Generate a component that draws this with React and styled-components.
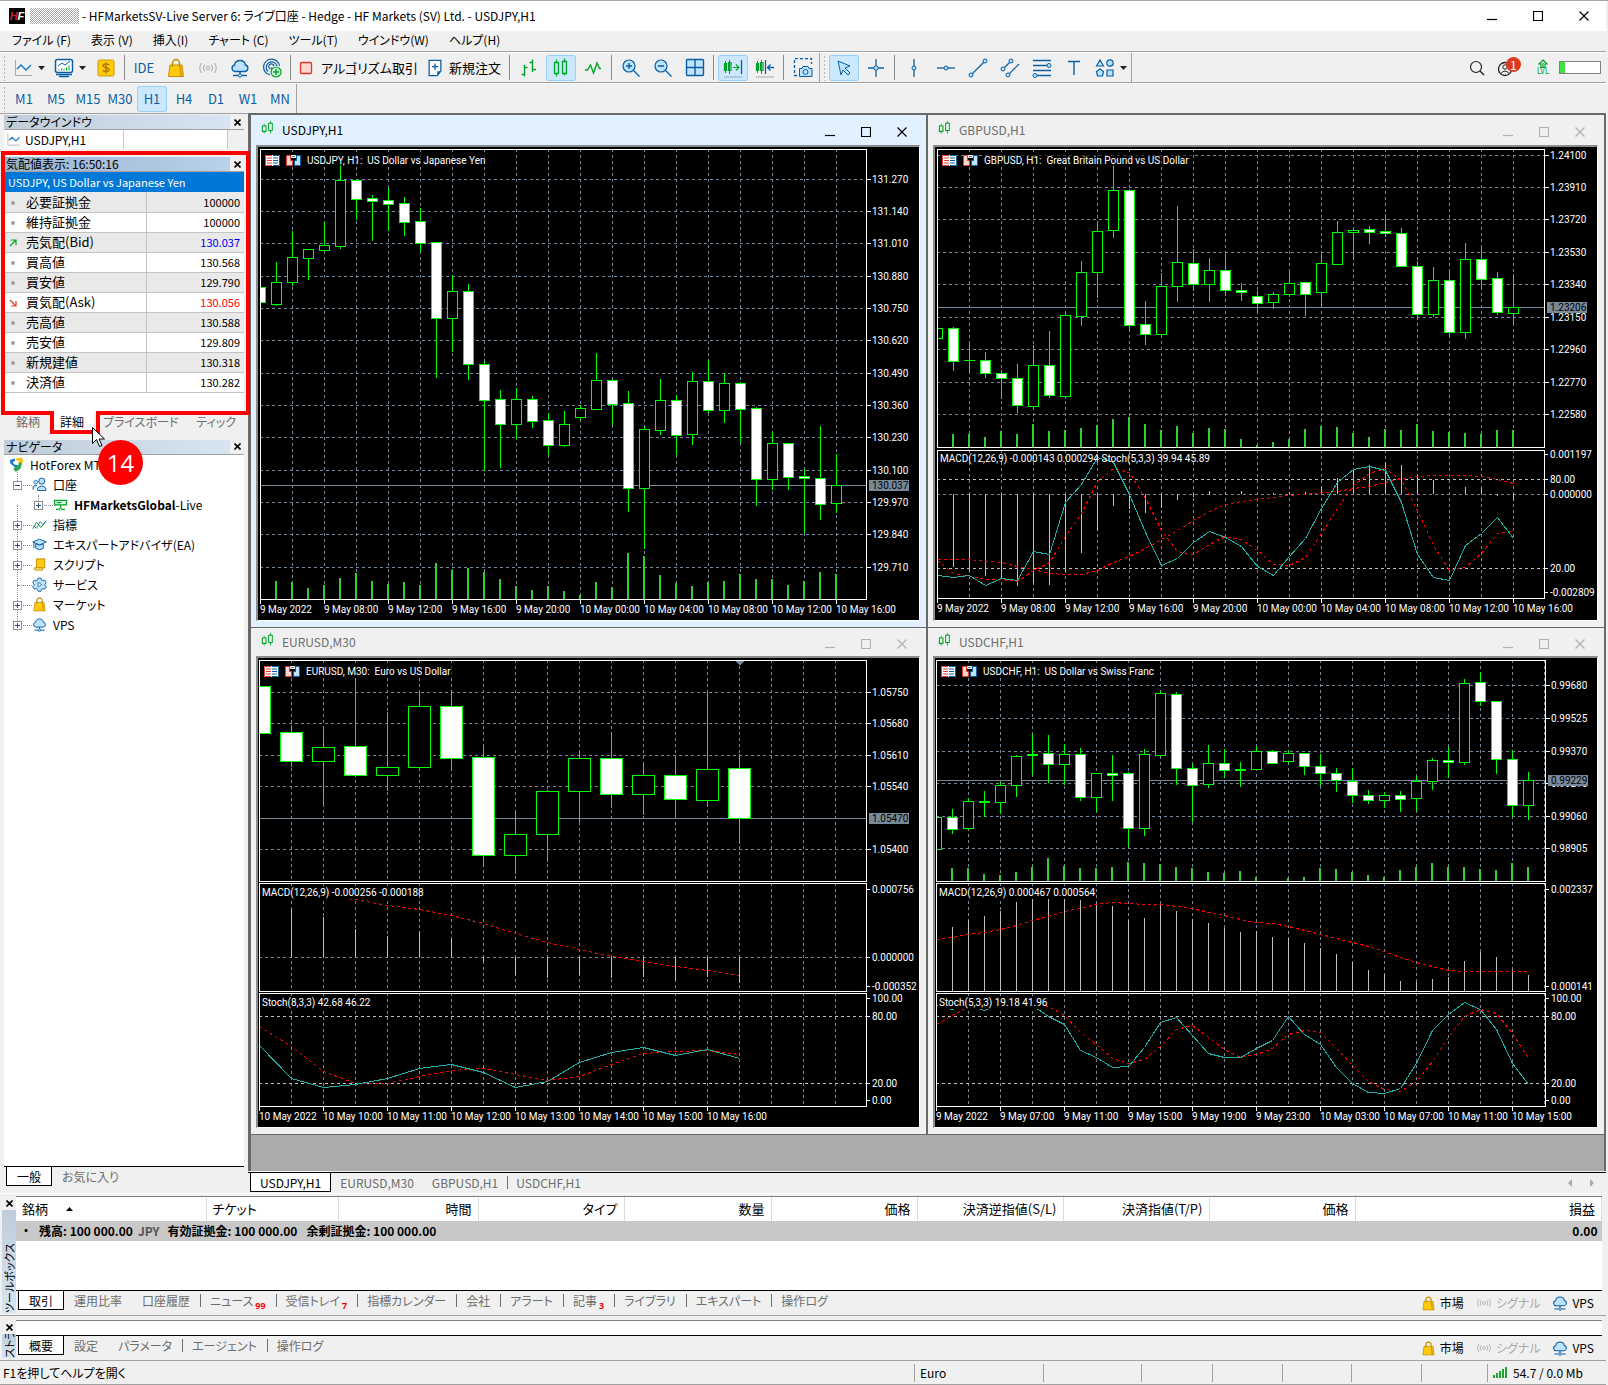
import React from "react"
import styled, { createGlobalStyle, css } from "styled-components"

const GlobalStyle = createGlobalStyle`
  * {
    box-sizing: border-box;
  }

  body {
    margin: 0;
    background: #f0f0f0;
    color: #000;
    font-family: "Noto Sans CJK JP", "Open Sans", sans-serif;
    font-feature-settings: "palt";
    font-size: 13px;
    line-height: 18px;
  }

  button {
    font: inherit;
    font-feature-settings: inherit;
    color: inherit;
    background: none;
    border: 0;
    padding: 0;
    white-space: nowrap;
  }

  ul {
    list-style: none;
    margin: 0;
    padding: 0;
  }

  table {
    border-collapse: collapse;
    table-layout: fixed;
    width: 100%;
  }

  td,
  th {
    padding: 0;
    font-weight: 400;
    text-align: left;
    white-space: nowrap;
  }
`

/* ---------- icons ---------- */

const BLUE = "#0a5ea3"
const SKY = "#bde3ff"
const GREEN = "#00a32a"
const GREY = "#a8a8a8"

const ICONS = {
  line: (
    <>
      <path d="M2.5 2v15.5H19" stroke={GREY} />
      <path d="M4 11l4-4 5 5 5-5" stroke="#1b7cc4" strokeWidth="1.5" />
    </>
  ),
  screen: (
    <>
      <rect x="1.5" y="1.5" width="17" height="13" rx="2" fill="#fff" stroke={BLUE} strokeWidth="1.5" />
      <path d="M4 8l4-3 3 2 5-4" stroke={BLUE} />
      <path d="M5 12.5v-1M7.5 12.5v-2M10 12.5v-2M12.5 12.5v-3M15 12.5v-5" stroke={GREEN} />
      <path d="M2 16.5h16M5 18.5h10" stroke={BLUE} strokeWidth="1.5" />
    </>
  ),
  dollar: (
    <>
      <rect x="2" y="2" width="16" height="16" rx="1.5" fill="#ffc90e" stroke="#d19a00" />
      <path d="M13 7c-1-1.5-6-1.5-6 .6 0 2.700 6 1.600 6 4.200 0 2.200-5 2.200-6.300.3M10 4.500v11" stroke="#b07a00" strokeWidth="1.4" />
    </>
  ),
  bag: (
    <>
      <path d="M4 7h12l1.500 11.500h-15z" fill="#ffc90e" stroke="#c78f00" />
      <path d="M6.500 9V5.500a3.500 4 0 0 1 7 0V9" stroke="#c78f00" strokeWidth="1.5" />
      <path d="M14 8l1 10" stroke="#d99f00" strokeWidth="2" />
    </>
  ),
  signal: (
    <>
      <circle cx="10" cy="10" r="1.8" stroke={GREY} />
      <path d="M6.500 6.500q-2.500 3.500 0 7M13.500 6.500q2.500 3.500 0 7M3.500 5q-3.500 5 0 10M16.500 5q3.500 5 0 10" stroke={GREY} />
    </>
  ),
  cloud: (
    <>
      <path d="M5 13.500a3.200 3.200 0 0 1-.5-6.300C5 4 7.500 2.500 10 2.500s5 1.500 5.300 4.500a3.300 3.300 0 0 1-.3 6.500z" fill={SKY} stroke={BLUE} strokeWidth="1.3" />
      <path d="M10 13.500v3M3 17.500h5M12 17.500h5" stroke={BLUE} strokeWidth="1.3" />
      <circle cx="10" cy="17.5" r="1.7" fill={SKY} stroke={BLUE} />
    </>
  ),
  globe: (
    <>
      <path d="M8 17A8 8 0 1 1 17.500 8M6 13.500A5.500 5.500 0 1 1 15 8M8 11a2.700 2.700 0 1 1 4-3" stroke={BLUE} strokeWidth="1.2" />
      <path d="M9 9l1.500 8" stroke={BLUE} />
      <circle cx="14" cy="14" r="5" fill="#d8f6dc" stroke={GREEN} strokeWidth="1.2" />
      <path d="M14 11v6M11 14h6" stroke={GREEN} strokeWidth="1.4" />
    </>
  ),
  stop: <rect x="4.5" y="4.5" width="11" height="11" rx="1" fill="#ffd5d0" stroke="#d9382c" strokeWidth="1.3" />,
  order: (
    <>
      <path d="M3.500 1.500h13v12l-4 5h-9z" fill="#fff" stroke={BLUE} strokeWidth="1.4" />
      <path d="M16.500 13.500h-4v5z" fill={BLUE} />
      <path d="M10 5v7M6.500 8.500h7" stroke={BLUE} strokeWidth="1.5" />
    </>
  ),
  bars: <path d="M5.500 7v11.500M5.500 9.500h3M2.500 16.500h3M13.500 1.500V14M10.500 4.500h3M13.500 11.500h3.500" stroke={GREEN} strokeWidth="1.4" />,
  candles: (
    <>
      <path d="M5.500 1.500v17M13.500 .5v17" stroke={GREEN} strokeWidth="1.2" />
      <path d="M3.500 4.500h4v11h-4zM11.500 3.500h4v12h-4z" fill={SKY} stroke={GREEN} strokeWidth="1.3" />
    </>
  ),
  zigzag: <path d="M2 12h2.500l3-5 3 8L14 5l2.500 5.500H18" stroke={GREEN} strokeWidth="1.4" />,
  symbol: (
    <>
      <path d="M3.500 3v11M10.500 0v14" stroke={GREEN} />
      <path d="M1.500 5.500h4v6h-4zM8.500 2.500h4v8h-4z" fill="#f4fff4" stroke={GREEN} strokeWidth="1.2" />
    </>
  ),
  zoomIn: (
    <>
      <circle cx="8" cy="8" r="6" fill={SKY} stroke={BLUE} strokeWidth="1.2" />
      <path d="M12.500 12.500l6 6M8 5v6M5 8h6" stroke={BLUE} strokeWidth="1.4" />
    </>
  ),
  zoomOut: (
    <>
      <circle cx="8" cy="8" r="6" fill={SKY} stroke={BLUE} strokeWidth="1.2" />
      <path d="M12.500 12.500l6 6M5 8h6" stroke={BLUE} strokeWidth="1.4" />
    </>
  ),
  tile: (
    <>
      <rect x="1.5" y="1.5" width="17" height="16" rx="1" fill={SKY} stroke={BLUE} strokeWidth="1.4" />
      <path d="M10 1.500v16M1.500 9.500h17" stroke={BLUE} strokeWidth="1.4" />
    </>
  ),
  scroll: (
    <>
      <path d="M2.500 3v12M6.500 2v14" stroke={GREEN} />
      <path d="M1.500 5.500h2v7h-2zM5.500 4.500h2.500v8H5.500zM10 9.500h6M13 6.500l3 3-3 3" stroke={GREEN} strokeWidth="1.2" />
      <path d="M18.500 2v14" stroke={BLUE} strokeWidth="1.3" />
      <path d="M1 19h18" stroke={GREY} />
    </>
  ),
  shift: (
    <>
      <path d="M2.500 3v12M6.500 2v14" stroke={GREEN} />
      <path d="M1.500 5.500h2v7h-2zM5.500 4.500h2.500v8H5.500z" stroke={GREEN} strokeWidth="1.2" />
      <path d="M10.500 2v14M19 9.500h-6M15.500 6.500l-3 3 3 3" stroke={BLUE} strokeWidth="1.3" />
      <path d="M1 19h18" stroke={GREY} />
    </>
  ),
  camera: (
    <>
      <path d="M4 17.500H1.500v-17h17V6" stroke={BLUE} strokeWidth="1.3" strokeDasharray="3 2" />
      <path d="M6.500 10.500H9l1-2h5l1 2h3v8H6.500z" fill={SKY} stroke={BLUE} />
      <circle cx="12.5" cy="14" r="2.5" fill={SKY} stroke={BLUE} />
    </>
  ),
  cursor: <path d="M4 3l12 5-5 2 5 5-2 2-5-5-2 5z" fill={SKY} stroke={BLUE} />,
  cross: (
    <>
      <path d="M10 1v18M2 10h16" stroke={BLUE} strokeWidth="1.3" />
      <circle cx="10" cy="10" r="2.2" fill={SKY} stroke={BLUE} />
    </>
  ),
  vline: (
    <>
      <path d="M10 1v18" stroke={BLUE} strokeWidth="1.3" />
      <circle cx="10" cy="10" r="2" fill={SKY} stroke={BLUE} />
    </>
  ),
  hline: (
    <>
      <path d="M1 10h18" stroke={BLUE} strokeWidth="1.3" />
      <circle cx="10" cy="10" r="2" fill={SKY} stroke={BLUE} />
    </>
  ),
  trend: (
    <>
      <path d="M3 17L17 3" stroke={BLUE} strokeWidth="1.2" />
      <circle cx="3" cy="17" r="2" fill={SKY} stroke={BLUE} />
      <circle cx="17" cy="3" r="2" fill={SKY} stroke={BLUE} />
    </>
  ),
  channel: (
    <>
      <path d="M3 11l8-8M8 17l11-11" stroke={BLUE} strokeWidth="1.2" />
      <circle cx="3" cy="11" r="2" fill={SKY} stroke={BLUE} />
      <circle cx="11" cy="3" r="2" fill={SKY} stroke={BLUE} />
      <circle cx="8" cy="17" r="2" fill={SKY} stroke={BLUE} />
    </>
  ),
  fibo: (
    <>
      <path d="M1 2.500h18M1 7.500h15M1 12.500h18M4 17.500h15" stroke={BLUE} strokeWidth="1.3" />
      <circle cx="17" cy="7.5" r="2" fill={SKY} stroke={BLUE} />
      <circle cx="3" cy="17.5" r="2" fill={SKY} stroke={BLUE} />
    </>
  ),
  text: <path d="M4 3.500h12M10 3.500V17" stroke={BLUE} strokeWidth="1.4" />,
  shapes: (
    <>
      <path d="M5 2l3.500 6h-7zM5 11l3.500 2.500-1 4.500h-5l-1-4.500zM12 12h6v6h-6z" fill={SKY} stroke={BLUE} strokeWidth="1.2" />
      <circle cx="15" cy="5" r="3.2" fill={SKY} stroke={BLUE} strokeWidth="1.2" />
    </>
  ),
  search: (
    <>
      <circle cx="9" cy="9" r="5.5" stroke="#222" strokeWidth="1.2" />
      <path d="M13 13l4 4" stroke="#222" strokeWidth="1.4" />
    </>
  ),
  user: (
    <>
      <circle cx="8" cy="11" r="6.5" stroke="#222" strokeWidth="1.3" />
      <circle cx="8" cy="9" r="2.2" stroke="#222" />
      <path d="M4 15.500q4-5 8 0" stroke="#222" />
    </>
  ),
  level: <path d="M10 1l4 4h-2v3.500H8V5H6zM10 4v4" stroke={GREEN} strokeWidth="1.2" />,
  root: (
    <>
      <path d="M9 2l8-1.500 2.500 5L15 11l-3-3 2-3-5-.5z" fill="#ffc20e" />
      <path d="M1 4l7-2v3L5 7l2 3 5 1-2 4-8-6z" fill="#1478d4" />
      <path d="M7 14l4-1 3-6 3.500 1L15 16l-6 3.500-3-3z" fill="#2ba84a" />
    </>
  ),
  people: (
    <>
      <circle cx="13" cy="5.5" r="4" fill={SKY} stroke={BLUE} strokeWidth="1.3" />
      <circle cx="5" cy="7" r="2.5" fill={SKY} stroke={BLUE} />
      <path d="M7.500 18v-3q5.500-6 11 0v3zM1.500 17v-4q2-2.500 5-1.500" fill={SKY} stroke={BLUE} strokeWidth="1.3" />
    </>
  ),
  server: (
    <>
      <path d="M2 4.500h16v6H2zM10 10.500V15M4 16.500h4M12 16.500h4" stroke={GREEN} strokeWidth="1.6" fill="#d8f6dc" />
      <path d="M5 7.500h6" stroke={GREEN} strokeWidth="1.5" />
      <circle cx="10" cy="16" r="1.8" stroke={GREEN} />
    </>
  ),
  indicator: (
    <>
      <path d="M1 16l5-9 6 7 6-8" stroke={GREEN} strokeWidth="1.3" />
      <path d="M2 12l4 3 5-9 4 4 4-5" stroke={BLUE} />
    </>
  ),
  expert: (
    <>
      <path d="M1 6.500L10 3l9 3.500-9 4z" fill={SKY} stroke={BLUE} strokeWidth="1.3" />
      <path d="M5 9v6q5 4 10 0V9l-5 2zM2.500 7v8" fill={SKY} stroke={BLUE} strokeWidth="1.3" />
    </>
  ),
  script: (
    <>
      <path d="M6 2.500h11v12H6z" fill="#ffc90e" stroke="#c78f00" strokeWidth="1.3" />
      <path d="M3 14.500h11v3H4z" fill="#ffe9a0" stroke="#c78f00" strokeWidth="1.3" />
    </>
  ),
  service: (
    <>
      <path d="M8 1.500h4l.6 2.500 2 1 2.500-.8 2 3.400-1.900 1.900v1.500l1.900 1.900-2 3.400-2.500-.8-2 1-.6 2.500H8l-.6-2.500-2-1-2.500.8-2-3.400 1.900-1.900V9.500L.9 7.600l2-3.400 2.500.8 2-1z" fill={SKY} stroke={BLUE} strokeWidth="1.2" />
      <path d="M8 7l5 3.200-5 3.300z" stroke={BLUE} fill="#fff" />
    </>
  ),
}

function Icon({ name, size = 20 }) {
  return (
    <svg width={size} height={size} viewBox="0 0 20 20" fill="none" aria-hidden="true">
      {ICONS[name]}
    </svg>
  )
}

function Arrow() {
  return (
    <svg width="7" height="4" viewBox="0 0 7 4" aria-hidden="true">
      <path d="M0 0h7L3.500 4z" fill="#222" />
    </svg>
  )
}

function WindowGlyph({ kind, size = 10 }) {
  const d = { min: "M0 8.500h10", max: "M.5 .5h9v9h-9z", close: "M.5 .5l9 9M9.500 .5l-9 9" }[kind]
  return (
    <svg width={size} height={size} viewBox="0 0 10 10" fill="none" stroke="currentColor" strokeWidth="1.2" aria-hidden="true">
      <path d={d} />
    </svg>
  )
}

/* ---------- frame ---------- */

const Frame = styled.div`
  display: flex;
  flex-direction: column;
  min-height: 100vh;
  padding-right: 2px;
  background: #f0f0f0;
  border-top: 1px solid #a9a9a9;
`
const TitleBar = styled.header`
  display: flex;
  align-items: center;
  height: 30px;
  padding: 0 17px 0 9px;
  background: #fff;
`
const AppTitle = styled.h1`
  flex: 1;
  margin: 0;
  font-size: 12px;
  font-weight: 400;
`
const Logo = styled.span`
  width: 16px;
  height: 16px;
  background: #000;
  color: #fff;
  font: italic 700 11px/16px "Liberation Sans", sans-serif;
  text-align: center;

  b {
    color: #d3202a;
  }
`
const Masked = styled.span`
  width: 49px;
  height: 16px;
  margin: 0 3px 0 5px;
  background: repeating-conic-gradient(#aaa 0 25%, #fff 0 50%) 0 0 / 2px 2px;
`
const WindowButtons = styled.div`
  display: flex;
  gap: ${p => p.$gap}px;
  color: ${p => p.$color};

  button,
  svg {
    display: block;
  }
`
const MenuBar = styled.nav`
  display: flex;
  align-items: center;
  gap: 20px;
  height: 21px;
  padding: 0 0 2px 12px;
  border-bottom: 1px solid #a0a0a0;
  font-size: 12px;
`
const ToolBar = styled.div`
  display: flex;
  height: ${p => p.$height}px;
  border-top: 1px solid #fff;
  border-bottom: ${p => (p.$line ? "1px solid #a0a0a0" : "0")};
`
const ToolGroup = styled.div`
  display: flex;
  align-items: center;
  border-right: 1px solid #a0a0a0;
`
const Grip = styled.span`
  width: 8px;
  height: 26px;
  background: radial-gradient(#b5b5b5 40%, transparent 45%) 3px 0 / 3px 4px repeat-y;
`
const Sep = styled.span`
  width: 1px;
  height: 25px;
  margin: 0 3px 0 2px;
  background: #8a8a8a;
`
const ToolButton = styled.button`
  display: flex;
  align-items: center;
  justify-content: center;
  gap: 5px;
  width: ${p => p.$width || 30}px;
  height: 26px;
  margin: 0 1px;
  border-radius: 3px;
  color: ${p => (p.$dark ? "#000" : BLUE)};

  ${p =>
    p.$on &&
    css`
      background: #cce8ff;
      box-shadow: inset 0 0 0 1px #99d1ff;
    `}
`
const ToolStatus = styled.div`
  display: flex;
  align-items: center;
  gap: 10px;
  margin-left: auto;
  padding-right: 5px;

  svg {
    display: block;
  }
`
const UserButton = styled.button`
  position: relative;
  margin-right: 10px;
`
const Count = styled.span`
  position: absolute;
  top: -1px;
  left: 9px;
  width: 15px;
  height: 15px;
  border-radius: 50%;
  background: #df3a20;
  color: #fff;
  font-size: 12px;
  line-height: 15px;
  text-align: center;
`
const Level = styled.span`
  display: flex;
  flex-direction: column;
  align-items: center;
  color: ${GREEN};
  font: 8px/8px "DejaVu Sans Condensed", sans-serif;
`
const Meter = styled.span`
  width: 42px;
  height: 13px;
  border: 1px solid #808080;
  background: linear-gradient(90deg, #42e042 5px, #fff 5px);
`

/* ---------- side panels ---------- */

const Body = styled.main`
  display: flex;
  border-bottom: 1px solid #fff;
`
const Side = styled.aside`
  display: flex;
  flex-direction: column;
  flex: none;
  width: 248px;
  padding: 1px 4px 5px;
  border-top: 1px solid #a0a0a0;
`
const Panel = styled.section`
  display: flex;
  flex-direction: column;
  position: relative;
  flex: ${p => (p.$grow ? 1 : "none")};
  margin-bottom: ${p => p.$after || 0}px;
`
const Caption = styled.header`
  display: flex;
  align-items: center;
  justify-content: space-between;
  height: 14px;
  font-size: 12px;
  line-height: 14px;

  h2 {
    width: 226px;
    margin: 0;
    padding-left: 2px;
    background: linear-gradient(90deg, ${p => (p.$active ? "#99b4d1, #b9d1ea" : "#bfcddb, #d7e4f2")});
    font-size: 12px;
    font-weight: 400;
  }

  button {
    padding: 0 3px;
    line-height: 0;
  }
`
const Sheet = styled.div`
  flex: 1;
  padding-bottom: ${p => p.$space || 0}px;
  border-top: 1px solid #a0a0a0;
  background: #fff;
`
const DataRow = styled.div`
  display: grid;
  grid-template-columns: 120px 1fr 16px;
  height: 19px;

  span {
    display: flex;
    align-items: center;
    gap: 4px;
    padding-left: 2px;
    font-size: 12px;
    border-right: 1px solid #c8c8c8;
  }

  span:last-child {
    background: #f0f0f0;
    border: 0;
  }
`
const QuoteTable = styled.table`
  thead th {
    height: 20px;
    padding-left: 4px;
    background: #0078d7;
    color: #fff;
    font-size: 11px;
  }

  tbody tr:nth-child(odd) {
    background: #e9e9e9;
  }

  tbody tr {
    height: 20px;
    border-bottom: 1px solid #c3c3c3;
  }

  tbody th {
    border-right: 1px solid #c3c3c3;
    line-height: 18px;
  }

  tbody th svg {
    margin: 0 9px 0 5px;
    vertical-align: 0;
  }

  td {
    padding-right: 4px;
    text-align: right;
    font-size: 11px;
    line-height: 18px;
  }
`
const Price = styled.td`
  color: ${p => p.$color || "#000"};
`
const Highlight = styled.svg`
  position: absolute;
  top: -6px;
  left: -3px;
  pointer-events: none;
`
const StepBadge = styled.span`
  position: absolute;
  top: 283px;
  left: 94px;
  z-index: 2;
  width: 45px;
  height: 45px;
  border-radius: 50%;
  background: #f00;
  color: #fff;
  font: 24px/45px "Open Sans", sans-serif;
  text-align: center;
`
const Pointer = styled.svg`
  position: absolute;
  top: 270px;
  left: 88px;
  z-index: 1;
`
const Tabs = styled.div`
  display: flex;
  align-items: flex-start;
  height: ${p => p.$height || 22}px;
  padding-left: 2px;
  border-top: ${p => (p.$plain ? "0" : "1px solid #000")};
  background: #f0f0f0;
  color: #6d6d6d;
  font-size: 12px;
`
const TabButton = styled.button`
  position: relative;
  height: 19px;
  padding: 0 ${p => (p.$tight ? 9 : 10)}px;
  line-height: 17px;

  & + &::before {
    content: "";
    position: absolute;
    left: 0;
    top: 3px;
    height: 13px;
    border-left: ${p => (p.$first ? "0" : "1px solid #6d6d6d")};
  }

  ${p =>
    p.$on &&
    css`
      color: #000;
      background: #fff;
      border: solid #000;
      border-width: ${p.$plain ? "0" : "0 1px 1px"};
    `}

  small {
    color: #f00;
    font: 700 9px/9px "Open Sans", sans-serif;
    margin-left: 2px;
    vertical-align: -3px;
  }
`
const Tree = styled.ul`
  padding-left: 5px;
  font-size: 12px;
`
const TreeRow = styled.li`
  display: flex;
  align-items: center;
  height: 20px;
  padding-left: ${p => p.$level * 21}px;

  svg {
    margin-right: 6px;
  }
`
const Guide = styled.span`
  position: relative;
  align-self: stretch;
  width: 23px;
  margin-left: -21px;

  &::before {
    content: "";
    position: absolute;
    top: ${p => (p.$deep ? "0" : "-10px")};
    bottom: 10px;
    left: 8px;
    border-left: 1px dotted #888;
  }

  &::after {
    content: "";
    position: absolute;
    top: 10px;
    left: 9px;
    right: 0;
    border-top: 1px dotted #888;
  }
`
const Expander = styled.button`
  position: absolute;
  z-index: 1;
  top: 6px;
  left: 4px;
  width: 9px;
  height: 9px;
  border: 1px solid #919191;
  background:
    linear-gradient(#2b4a8b, #2b4a8b) center / 5px 1px no-repeat,
    ${p => (p.$open ? "" : "linear-gradient(#2b4a8b, #2b4a8b) center / 1px 5px no-repeat,")} #fff;
`

/* ---------- chart windows ---------- */

const Workspace = styled.section`
  display: flex;
  flex-direction: column;
  flex: 1;
`
const Desktop = styled.div`
  padding-bottom: 36px;
  border: solid #696969;
  border-width: 2px 2px 0 3px;
  background: #ababab;
`
const WindowGrid = styled.div`
  display: grid;
  grid-template-columns: 675fr 676fr;
  gap: 1px 2px;
  border-bottom: 1px solid #696969;
  background: #696969;
`
const ChartWindow = styled.article`
  padding: 0 6px 6px 5px;
  background: ${p => (p.$active ? "#e1f1ff" : "#f0f0f0")};
`
const ChartHead = styled.header`
  display: flex;
  align-items: center;
  gap: 3px;
  height: ${p => p.$height}px;
  padding: 0 13px 0 5px;
  color: ${p => (p.$active ? "#000" : "#6d6d6d")};

  h3 {
    flex: 1;
    margin: 0;
    font-size: 12px;
    font-weight: 400;
  }

  > div {
    padding-top: 4px;
  }
`
const Plot = styled.svg`
  display: block;
  width: 100%;
  height: auto;
  border: solid #fff;
  border-color: #8c8c8c #fff #fff #8c8c8c;
  border-width: 2px 1px 1px 2px;
  background: #000;
  font-family: Roboto, sans-serif;
  font-size: 10px;
  fill: #fff;
`
const ChartTabs = styled.div`
  display: flex;
  align-items: center;
  justify-content: space-between;
  margin-top: 1px;
  padding-right: 12px;
  border-top: 1px solid #000;
`

const GRID = "#778899"

// every candle is [high, top, bottom, low, filled]
const CHARTS = [
  {
    symbol: "USDJPY,H1",
    title: "USDJPY, H1:  US Dollar vs Japanese Yen",
    titleWidth: 180,
    active: true,
    view: [258, 147, 661, 473],
    left: 260,
    right: 866,
    panes: [[149, 599]],
    step: 16,
    half: 5,
    gridX: 292,
    gridEnd: 836,
    gridY: [179, 211, 243, 276, 308, 340, 373, 405, 437, 470, 502, 534, 567],
    prices: ["131.270", "131.140", "131.010", "130.880", "130.750", "130.620", "130.490", "130.360", "130.230", "130.100", "129.970", "129.840", "129.710"],
    last: [485, "130.037"],
    timeStep: 64,
    times: ["9 May 2022", "9 May 08:00", "9 May 12:00", "9 May 16:00", "9 May 20:00", "10 May 00:00", "10 May 04:00", "10 May 08:00", "10 May 12:00", "10 May 16:00"],
    candles: [
      [287, 287, 302, 302, 1], [262, 282, 304, 305, 0], [231, 257, 282, 285, 0], [249, 249, 258, 279, 0],
      [222, 245, 250, 250, 0], [162, 180, 246, 248, 0], [179, 180, 199, 219, 1], [195, 198, 201, 240, 1],
      [188, 200, 204, 230, 1], [197, 203, 222, 235, 1], [208, 221, 243, 251, 1], [242, 242, 318, 377, 1],
      [275, 291, 318, 351, 0], [284, 291, 364, 379, 1], [361, 364, 400, 470, 1], [390, 399, 424, 467, 1],
      [388, 399, 424, 438, 0], [396, 399, 421, 427, 1], [413, 420, 445, 454, 1], [411, 424, 445, 446, 0],
      [405, 408, 417, 419, 0], [353, 380, 409, 409, 0], [379, 380, 404, 424, 1], [391, 403, 488, 511, 1],
      [426, 429, 488, 548, 0], [379, 400, 430, 434, 0], [395, 400, 435, 454, 1], [372, 381, 434, 444, 0],
      [360, 381, 410, 412, 1], [373, 383, 410, 422, 0], [382, 383, 409, 442, 1], [407, 408, 479, 505, 1],
      [432, 443, 479, 489, 0], [443, 443, 477, 489, 1], [469, 476, 478, 532, 1], [426, 478, 504, 519, 1],
      [454, 485, 503, 512, 0],
    ],
    volumes: [581, 582, 588, 585, 578, 573, 581, 584, 582, 585, 563, 570, 568, 572, 579, 586, 590, 586, 591, 595, 582, 587, 553, 556, 575, 583, 586, 582, 581, 574, 579, 579, 585, 581, 572, 574],
    notes: [],
    scale: [],
    levels: [],
    lines: [],
  },
  {
    symbol: "GBPUSD,H1",
    title: "GBPUSD, H1:  Great Britain Pound vs US Dollar",
    titleWidth: 210,
    view: [935, 147, 662, 473],
    left: 937,
    right: 1544,
    panes: [[149, 447], [450, 598]],
    step: 16,
    half: 5,
    gridX: 969,
    gridEnd: 1513,
    gridY: [155, 187, 219, 252, 284, 317, 349, 382, 414],
    prices: ["1.24100", "1.23910", "1.23720", "1.23530", "1.23340", "1.23150", "1.22960", "1.22770", "1.22580"],
    last: [307, "1.23206"],
    timeStep: 64,
    times: ["9 May 2022", "9 May 08:00", "9 May 12:00", "9 May 16:00", "9 May 20:00", "10 May 00:00", "10 May 04:00", "10 May 08:00", "10 May 12:00", "10 May 16:00"],
    candles: [
      [328, 328, 338, 338, 0], [327, 328, 361, 370, 1], [343, 360, 360, 373, 0], [352, 360, 373, 377, 1],
      [370, 373, 378, 398, 1], [364, 378, 405, 412, 1], [345, 365, 406, 409, 0], [331, 365, 395, 397, 1],
      [312, 315, 396, 398, 0], [261, 272, 316, 325, 0], [221, 231, 272, 297, 0], [163, 190, 230, 237, 0],
      [189, 190, 325, 328, 1], [301, 324, 334, 344, 1], [273, 286, 334, 337, 0], [206, 262, 286, 301, 0],
      [249, 263, 284, 290, 1], [258, 270, 284, 301, 0], [251, 270, 290, 294, 1], [283, 290, 292, 300, 1],
      [291, 296, 303, 311, 1], [292, 294, 302, 308, 0], [272, 283, 294, 296, 0], [282, 282, 294, 315, 1],
      [253, 263, 292, 305, 0], [221, 232, 264, 264, 0], [229, 230, 232, 259, 0], [226, 229, 232, 243, 1],
      [214, 231, 233, 236, 1], [228, 233, 266, 266, 1], [261, 266, 314, 316, 1], [267, 280, 314, 316, 0],
      [271, 280, 332, 337, 1], [243, 259, 332, 338, 0], [247, 259, 279, 289, 1], [272, 278, 312, 314, 1],
      [274, 307, 313, 322, 0],
    ],
    volumes: [434, 434, 437, 431, 434, 424, 431, 430, 428, 425, 419, 417, 424, 430, 426, 433, 428, 429, 439, 445, 442, 439, 429, 426, 427, 433, 437, 429, 430, 424, 431, 432, 433, 434, 430, 430],
    histogram: { base: 494, ends: [567, 571, 576, 579, 586, 583, 585, 572, 553, 531, 506, 509, 513, 508, 500, 497, 491, 492, 491, 494, 493, 492, 492, 487, 478, 471, 465, 462, 465, 475, 480, 494, 487, 488, 496, 500] },
    notes: [["MACD(12,26,9) -0.000143 0.000294 Stoch(5,3,3) 39.94 45.89", 458, 0]],
    scale: [["0.001197", 454], ["80.00", 479], ["0.000000", 494], ["20.00", 568], ["-0.002809", 592]],
    levels: [[479, "#c0c0c0"], [494, GRID], [568, "#c0c0c0"]],
    lines: [
      ["#f00", [559, 559, 559, 561, 562, 566, 569, 573, 574, 574, 570, 562, 556, 548, 539, 530, 520, 511, 504, 501, 499, 497, 495, 494, 492, 491, 488, 486, 482, 478, 476, 475, 475, 475, 476, 479, 483]],
      ["#f00", [560, 573, 576, 579, 579, 581, 570, 562, 536, 513, 481, 468, 472, 498, 530, 551, 554, 544, 536, 539, 550, 564, 565, 557, 533, 508, 485, 473, 468, 480, 510, 545, 570, 567, 553, 533, 530]],
      ["#20b2aa", [575, 577, 575, 585, 578, 580, 551, 554, 502, 484, 457, 462, 494, 532, 565, 558, 542, 531, 537, 546, 566, 575, 556, 538, 508, 482, 469, 466, 470, 502, 554, 577, 580, 545, 533, 517, 538]],
    ],
  },
  {
    symbol: "EURUSD,M30",
    title: "EURUSD, M30:  Euro vs US Dollar",
    titleWidth: 152,
    view: [258, 658, 661, 469],
    left: 259,
    right: 866,
    panes: [[660, 881], [883, 991], [993, 1106]],
    step: 32,
    half: 11,
    gridX: 291,
    gridEnd: 835,
    marker: 739,
    gridY: [692, 723, 755, 786, 849],
    prices: ["1.05750", "1.05680", "1.05610", "1.05540", "1.05400"],
    last: [818, "1.05470"],
    timeStep: 64,
    times: ["10 May 2022", "10 May 10:00", "10 May 11:00", "10 May 12:00", "10 May 13:00", "10 May 14:00", "10 May 15:00", "10 May 16:00"],
    candles: [
      [686, 686, 733, 733, 1], [725, 732, 761, 766, 1], [729, 747, 761, 803, 0], [678, 746, 775, 775, 1],
      [712, 767, 775, 790, 0], [691, 706, 767, 767, 0], [690, 706, 758, 770, 1], [745, 757, 855, 866, 1],
      [810, 834, 855, 873, 0], [790, 791, 834, 861, 0], [750, 758, 791, 821, 0], [732, 758, 794, 807, 1],
      [762, 775, 794, 814, 0], [756, 775, 799, 815, 1], [693, 769, 800, 805, 0], [754, 768, 818, 843, 1],
    ],
    volumes: [],
    histogram: { base: 957, ends: [909, 917, 929, 936, 932, 939, 962, 975, 978, 975, 978, 977, 980, 977, 983] },
    notes: [["MACD(12,26,9) -0.000256 -0.000188", 892, 158], ["Stoch(8,3,3) 42.68 46.22", 1002, 106]],
    scale: [["0.000756", 889], ["0.000000", 957], ["-0.000352", 986], ["100.00", 998], ["80.00", 1016], ["20.00", 1083], ["0.00", 1100]],
    levels: [[957, GRID], [1016, "#c0c0c0"], [1083, "#c0c0c0"]],
    lines: [
      ["#f00", [892, 893, 896, 899, 905, 909, 915, 923, 933, 942, 949, 956, 961, 966, 970, 975]],
      ["#f00", [1026, 1046, 1071, 1083, 1083, 1076, 1070, 1068, 1074, 1080, 1076, 1064, 1053, 1051, 1050, 1054]],
      ["#20b2aa", [1045, 1078, 1087, 1084, 1078, 1068, 1064, 1072, 1087, 1081, 1062, 1052, 1047, 1055, 1049, 1058]],
    ],
  },
  {
    symbol: "USDCHF,H1",
    title: "USDCHF, H1:  US Dollar vs Swiss Franc",
    titleWidth: 178,
    view: [935, 658, 662, 469],
    left: 936,
    right: 1545,
    panes: [[660, 881], [883, 991], [993, 1106]],
    step: 16,
    half: 5,
    gridX: 968,
    gridEnd: 1544,
    gridY: [685, 718, 751, 783, 816, 848],
    prices: ["0.99680", "0.99525", "0.99370", "0.99215", "0.99060", "0.98905"],
    last: [780, "0.99229"],
    timeStep: 64,
    times: ["9 May 2022", "9 May 07:00", "9 May 11:00", "9 May 15:00", "9 May 19:00", "9 May 23:00", "10 May 03:00", "10 May 07:00", "10 May 11:00", "10 May 15:00"],
    candles: [
      [817, 817, 849, 849, 0], [809, 817, 829, 833, 1], [798, 801, 828, 829, 0], [791, 801, 802, 816, 0],
      [782, 785, 802, 813, 0], [755, 756, 785, 796, 0], [734, 754, 755, 774, 0], [735, 753, 764, 782, 1],
      [744, 754, 764, 784, 0], [748, 754, 797, 800, 1], [773, 773, 797, 811, 0], [755, 773, 775, 800, 1],
      [772, 773, 828, 846, 1], [749, 754, 828, 835, 0], [691, 693, 755, 755, 0], [692, 694, 768, 784, 1],
      [764, 768, 785, 821, 1], [745, 763, 784, 787, 0], [749, 763, 770, 777, 1], [762, 769, 770, 786, 0],
      [746, 751, 769, 769, 0], [750, 751, 763, 763, 1], [750, 753, 761, 763, 0], [753, 753, 766, 774, 1],
      [754, 766, 773, 785, 1], [768, 773, 780, 791, 1], [768, 781, 795, 802, 1], [790, 795, 800, 803, 1],
      [792, 795, 800, 807, 0], [791, 795, 799, 811, 1], [776, 781, 798, 810, 0], [758, 760, 781, 789, 0],
      [747, 760, 762, 777, 1], [679, 683, 762, 764, 0], [672, 682, 701, 705, 1], [701, 701, 759, 773, 1],
      [750, 759, 805, 816, 1], [772, 780, 805, 819, 0],
    ],
    volumes: [868, 868, 874, 875, 872, 867, 858, 866, 868, 868, 867, 862, 863, 864, 867, 868, 872, 873, 871, 877, 881, 878, 877, 868, 869, 872, 875, 877, 870, 867, 863, 867, 867, 869, 870, 863, 867],
    histogram: { base: 991, ends: [927, 920, 916, 911, 902, 898, 898, 898, 900, 903, 906, 920, 918, 905, 911, 919, 923, 928, 932, 931, 937, 938, 943, 948, 954, 962, 970, 974, 981, 982, 979, 977, 961, 952, 957, 970, 975] },
    notes: [["MACD(12,26,9) 0.000467 0.000564", 892, 152], ["Stoch(5,3,3) 19.18 41.96", 1002, 106]],
    scale: [["0.002337", 889], ["0.000141", 986], ["100.00", 998], ["80.00", 1016], ["20.00", 1083], ["0.00", 1100]],
    levels: [[1016, "#c0c0c0"], [1083, "#c0c0c0"]],
    lines: [
      ["#f00", [939, 937, 934, 932, 929, 925, 920, 916, 911, 908, 904, 902, 903, 904, 904, 906, 908, 912, 915, 919, 922, 923, 926, 930, 934, 938, 942, 946, 951, 957, 962, 966, 970, 971, 971, 971, 971, 971]],
      ["#f00", [1024, 1015, 1006, 1005, 1005, 1003, 1002, 1006, 1015, 1032, 1044, 1058, 1063, 1059, 1046, 1029, 1025, 1037, 1049, 1057, 1054, 1048, 1034, 1030, 1032, 1048, 1065, 1081, 1089, 1091, 1081, 1061, 1037, 1016, 1009, 1013, 1033, 1058]],
      ["#20b2aa", [1005, 1009, 1004, 1010, 1003, 998, 1005, 1016, 1024, 1050, 1057, 1067, 1066, 1047, 1022, 1017, 1035, 1053, 1057, 1057, 1048, 1040, 1016, 1034, 1044, 1067, 1083, 1092, 1093, 1088, 1063, 1030, 1014, 1002, 1009, 1029, 1063, 1084]],
    ],
  },
]

function ChartPlot({ chart }) {
  const { left, right, panes, step, half, histogram } = chart
  const at = i => left + i * step
  const bottom = panes[panes.length - 1][1]
  const columns = []
  for (let x = chart.gridX; x <= chart.gridEnd; x += 32) columns.push(x)

  return (
    <Plot viewBox={chart.view.join(" ")} role="img" aria-label={chart.title}>
      <g shapeRendering="crispEdges" fill="none">
        <g stroke={GRID} strokeDasharray="3 3">
          {columns.map(x => panes.map(([top, end]) => <path key={`${x}-${top}`} d={`M${x + 0.5} ${top}V${end}`} />))}
          {chart.gridY.map(y => <path key={y} d={`M${left} ${y + 0.5}H${right}`} />)}
          {chart.levels.map(([y, color]) => <path key={y} d={`M${left} ${y + 0.5}H${right}`} stroke={color} />)}
        </g>
        <path d={`M${left} ${chart.last[0] + 0.5}H${right}`} stroke={GRID} />
        {chart.marker && <path d={`M${chart.marker - 5} ${panes[0][0]}h11l-5 6z`} fill={GRID} />}
        {chart.volumes.map((y, i) => (
          <rect key={i} x={at(i + 1) - 1} y={y} width="2" height={panes[0][1] - y} fill="#32cd32" />
        ))}
        {histogram?.ends.map((y, i) => (
          <path key={i} d={`M${at(i + 1) + 0.5} ${histogram.base}V${y}`} stroke="#c0c0c0" />
        ))}
        {chart.candles.map(([high, top, end, low, filled], i) => {
          const x = at(i)
          const from = i === 0 ? x : x - half
          return (
            <g key={i} stroke="#0f0">
              <path d={`M${x + 0.5} ${high}V${low + 1}`} />
              <rect x={from + 0.5} y={top + 0.5} width={x + half - from} height={end - top} fill={filled ? "#fff" : "#000"} />
              {top === end && <path d={`M${from} ${top + 0.5}H${x + half + 1}`} />}
            </g>
          )
        })}
        {chart.lines.map(([color, ys], n) => (
          <polyline
            key={n}
            points={ys.map((y, i) => `${at(i) + 0.5},${y + 0.5}`).join(" ")}
            stroke={color}
            strokeDasharray={color === "#f00" ? "3 3" : undefined}
          />
        ))}
        {panes.map(([top, end]) => (
          <rect key={top} x={left + 0.5} y={top + 0.5} width={right - left} height={end - top} stroke="#fff" />
        ))}
      </g>

      <g transform={`translate(${left + 5} ${panes[0][0] + 6})`}>
        <path d="M0 0h15v11H0z" fill="#fff" />
        <path d="M7 .5H.5v10H7M2 3h5M2 5.500h5M2 8h5" stroke="#e03c31" fill="none" />
        <path d="M8 .5h6.500v10H8M8 3h5M8 5.500h5M8 8h5" stroke={BLUE} fill="none" />
        <path d="M21.500 .5h4v5h2v5h-6z" fill="#ffd5d0" stroke="#e03c31" />
        <path d="M35.500 .5h-4v5h-2v5h6z" fill={SKY} stroke={BLUE} />
        <path d="M26.500 .5h4v2h-4z" fill="#777" stroke="#fff" />
      </g>
      <rect x={left + 45} y={panes[0][0] + 5} width={chart.titleWidth} height="12" fill="#000" opacity="0.6" />
      <text x={left + 47} y={panes[0][0] + 15} xmlSpace="preserve">{chart.title}</text>
      {chart.notes.map(([text, y, width]) => (
        <g key={text}>
          <rect x={left + 2} y={y - 5} width={width} height="12" fill="#000" />
          <text x={left + 3} y={y + 4}>{text}</text>
        </g>
      ))}

      <g shapeRendering="crispEdges" stroke="#fff">
        {chart.gridY.map(y => <path key={y} d={`M${right} ${y + 0.5}h5`} />)}
        {chart.scale.map(([text, y]) => <path key={text} d={`M${right} ${y + 0.5}h4`} />)}
        {chart.times.map((text, i) => <path key={text} d={`M${left + i * chart.timeStep + 0.5} ${bottom}v5`} />)}
      </g>
      {chart.gridY.map((y, i) => <text key={y} x={right + 6} y={y + 4}>{chart.prices[i]}</text>)}
      {chart.scale.map(([text, y]) => <text key={text} x={right + 6} y={y + 4}>{text}</text>)}
      <rect x={right + 3} y={chart.last[0] - 5} width="40" height="11" fill={GRID} />
      <text x={right + 6} y={chart.last[0] + 4} fill="#000">{chart.last[1]}</text>
      {chart.times.map((text, i) => <text key={text} x={left + i * chart.timeStep} y={bottom + 14}>{text}</text>)}
    </Plot>
  )
}

/* ---------- bottom docks ---------- */

const Dock = styled.section`
  display: flex;
  margin-top: ${p => p.$top}px;
  border-bottom: 1px solid #a0a0a0;
`
const Spine = styled.header`
  display: flex;
  flex-direction: column;
  align-items: center;
  flex: none;
  width: 16px;
  padding: 0 0 2px 2px;

  button {
    height: 14px;
    line-height: 0;
  }

  h2 {
    flex: 1;
    width: 14px;
    height: 0;
    margin: 0;
    overflow: ${p => (p.$clip ? "hidden" : "visible")};
    background: linear-gradient(#d7e4f2, #bfcddb);
    font-size: 11px;
    font-weight: 400;
    line-height: 14px;
    white-space: nowrap;
    writing-mode: vertical-rl;
    text-orientation: sideways;
    transform: rotate(180deg);
  }
`
const DockMain = styled.div`
  flex: 1;
  margin-right: 4px;
  padding-bottom: 3px;
  border-top: 1px solid #808080;
`
const DockSheet = styled.div`
  height: ${p => p.$height}px;
  background: #fff;
`
const TradeTable = styled.table`
  th {
    height: 24px;
    padding: 0 6px;
    border-right: 1px solid #dcdcdc;
    text-align: right;
  }

  th:nth-child(-n + 2) {
    text-align: left;
  }

  th svg {
    margin-left: 18px;
    vertical-align: 3px;
  }

  td {
    height: 20px;
    padding: 0 4px 0 7px;
    background: #c8c8c8;
    font-size: 12px;
    font-weight: 700;
    line-height: 18px;
  }

  td:last-child {
    text-align: right;
  }

  td span {
    margin-left: 10px;
  }

  td em {
    margin: 0 4px 0 5px;
    color: #555;
    font-style: normal;
  }

  td em + span {
    margin-left: 4px;
  }

  td span + span {
    margin-left: 9px;
  }
`
const Services = styled.div`
  display: flex;
  align-items: center;
  gap: 12px;
  height: 20px;
  margin-left: auto;
  padding: 4px 8px 0 0;
`
const Service = styled.button`
  display: flex;
  align-items: center;
  gap: 4px;
  color: ${p => (p.$off ? "#a8a8a8" : "#000")};
`
const StatusBar = styled.footer`
  display: grid;
  grid-template-columns: 1fr 129px 98px 71px 70px 69px 70px 66px 119px;
  align-items: center;
  height: 24px;
  margin-top: auto;
  padding-left: 3px;
  border-bottom: 1px solid #a0a0a0;
  font-size: 12px;

  span + span {
    display: flex;
    align-items: center;
    gap: 6px;
    height: 18px;
    padding-left: 5px;
    border-left: 1px solid #a0a0a0;
  }
`

const MENUS = ["ファイル (F)", "表示 (V)", "挿入(I)", "チャート (C)", "ツール(T)", "ウインドウ(W)", "ヘルプ(H)"]
const FRAMES = ["M1", "M5", "M15", "M30", "H1", "H4", "D1", "W1", "MN"]

const QUOTES = [
  ["必要証拠金", "100000"],
  ["維持証拠金", "100000"],
  ["売気配(Bid)", "130.037", "#00f", "up"],
  ["買高値", "130.568"],
  ["買安値", "129.790"],
  ["買気配(Ask)", "130.056", "#f00", "down"],
  ["売高値", "130.588"],
  ["売安値", "129.809"],
  ["新規建値", "130.318"],
  ["決済値", "130.282"],
]

const NAVIGATOR = [
  ["people", "口座", 1, "open"],
  ["server", "HFMarketsGlobal", 2, "closed"],
  ["indicator", "指標", 1, "closed"],
  ["expert", "エキスパートアドバイザ(EA)", 1, "closed"],
  ["script", "スクリプト", 1, "closed"],
  ["service", "サービス", 1, null],
  ["bag", "マーケット", 1, "closed"],
  ["cloud", "VPS", 1, "closed"],
]

const COLUMNS = [
  ["銘柄", 190], ["チケット", 132], ["時間", 140], ["タイプ", 146], ["数量", 147],
  ["価格", 146], ["決済逆指値(S/L)", 146], ["決済指値(T/P)", 146], ["価格", 146], ["損益"],
]

const TOOLBOX_TABS = [
  ["取引"], ["運用比率"], ["口座履歴"], ["ニュース", 99], ["受信トレイ", 7], ["指標カレンダー"],
  ["会社"], ["アラート"], ["記事", 3], ["ライブラリ"], ["エキスパート"], ["操作ログ"],
]

function CloseX() {
  return (
    <button aria-label="閉じる">
      <svg width="7" height="7" viewBox="0 0 7 7" stroke="#000" strokeWidth="1.6" aria-hidden="true">
        <path d="M.5 .5l6 6M6.500 .5l-6 6" />
      </svg>
    </button>
  )
}

function RowMark({ kind }) {
  return (
    <svg width="8" height="8" viewBox="0 0 8 8" fill="none" aria-hidden="true">
      {!kind && <circle cx="4" cy="4" r="2" fill="#a0a0a0" />}
      {kind === "up" && <path d="M1 7l6-6M2 1h5v5" stroke="#00a32a" strokeWidth="1.2" />}
      {kind === "down" && <path d="M1 1l6 6M7 2v5H2" stroke="#d9382c" strokeWidth="1.2" />}
    </svg>
  )
}

function TabRow({ items, tight }) {
  return items.map(([label, count], i) => (
    <TabButton key={label} $on={i === 0} $first={i === 1} $tight={tight}>
      {label}
      {count && <small>{count}</small>}
    </TabButton>
  ))
}

function DockServices() {
  return (
    <Services>
      <Service><Icon name="bag" size={15} />市場</Service>
      <Service $off><Icon name="signal" size={16} />シグナル</Service>
      <Service><Icon name="cloud" size={16} />VPS</Service>
    </Services>
  )
}

function Tools({ names, on }) {
  return names.map(name => (
    <ToolButton key={name} aria-label={name} $on={name === on}>
      <Icon name={name} />
    </ToolButton>
  ))
}

function TopBars() {
  return (
    <>
      <TitleBar>
        <Logo><b>H</b>F</Logo>
        <Masked />
        <AppTitle>- HFMarketsSV-Live Server 6: ライブ口座 - Hedge - HF Markets (SV) Ltd. - USDJPY,H1</AppTitle>
        <WindowButtons $gap={36} $color="#000">
          <button aria-label="最小化"><WindowGlyph kind="min" /></button>
          <button aria-label="最大化"><WindowGlyph kind="max" /></button>
          <button aria-label="閉じる"><WindowGlyph kind="close" /></button>
        </WindowButtons>
      </TitleBar>
      <MenuBar>
        {MENUS.map(menu => <button key={menu}>{menu}</button>)}
      </MenuBar>
      <ToolBar $height={31} $line>
        <ToolGroup>
          <Grip />
          <ToolButton $width={39} aria-label="line chart"><Icon name="line" /><Arrow /></ToolButton>
          <ToolButton $width={39} aria-label="indicators"><Icon name="screen" /><Arrow /></ToolButton>
          <Tools names={["dollar"]} />
          <Sep />
          <ToolButton>IDE</ToolButton>
          <Tools names={["bag", "signal", "cloud", "globe"]} />
          <Sep />
          <ToolButton $width={124} $dark><Icon name="stop" />アルゴリズム取引</ToolButton>
          <ToolButton $width={85} $dark><Icon name="order" size={18} />新規注文</ToolButton>
          <Sep />
          <Tools names={["bars", "candles", "zigzag"]} on="candles" />
          <Sep />
          <Tools names={["zoomIn", "zoomOut", "tile"]} />
          <Sep />
          <Tools names={["scroll", "shift"]} on="scroll" />
          <Sep />
          <Tools names={["camera"]} />
        </ToolGroup>
        <ToolGroup>
          <Grip />
          <Tools names={["cursor", "cross"]} on="cursor" />
          <Sep />
          <Tools names={["vline", "hline", "trend", "channel", "fibo", "text"]} />
          <ToolButton $width={39} aria-label="shapes"><Icon name="shapes" /><Arrow /></ToolButton>
        </ToolGroup>
        <ToolStatus>
          <button aria-label="検索"><Icon name="search" /></button>
          <UserButton aria-label="アカウント"><Icon name="user" /><Count>1</Count></UserButton>
          <Level>
            <svg width="12" height="9" viewBox="4 0 12 9" fill="none" aria-hidden="true">{ICONS.level}</svg>
            LVL
          </Level>
          <Meter />
        </ToolStatus>
      </ToolBar>
      <ToolBar $height={30}>
        <ToolGroup>
          <Grip />
          {FRAMES.map(name => <ToolButton key={name} $on={name === "H1"}>{name}</ToolButton>)}
        </ToolGroup>
      </ToolBar>
    </>
  )
}

function MarketWatch() {
  return (
    <Panel $after={6}>
      <Caption $active>
        <h2>気配値表示: 16:50:16</h2>
        <CloseX />
      </Caption>
      <Sheet $space={19}>
        <QuoteTable>
          <colgroup>
            <col width="142" />
            <col />
          </colgroup>
          <thead>
            <tr><th colSpan="2">USDJPY, US Dollar vs Japanese Yen</th></tr>
          </thead>
          <tbody>
            {QUOTES.map(([label, value, color, mark]) => (
              <tr key={label}>
                <th scope="row"><RowMark kind={mark} />{label}</th>
                <Price $color={color}>{value}</Price>
              </tr>
            ))}
          </tbody>
        </QuoteTable>
      </Sheet>
      <Tabs $plain $height={22}>
        <TabButton>銘柄</TabButton>
        <TabButton $on $plain $first>詳細</TabButton>
        <TabButton $first $tight>プライスボード</TabButton>
        <TabButton $tight>ティック</TabButton>
      </Tabs>
      <Highlight width="250" height="284" fill="none" stroke="#f00" strokeWidth="4" aria-hidden="true">
        <path d="M2 2h245v260H97v19H51v-19H2z" />
      </Highlight>
      <Pointer width="13" height="21" viewBox="0 0 13 21" aria-hidden="true">
        <path d="M.5 .5v16l4-4 3 7 2.500-1-3-6.500h5.500z" fill="#fff" stroke="#000" />
      </Pointer>
      <StepBadge>14</StepBadge>
    </Panel>
  )
}

function Navigator() {
  return (
    <Panel $grow>
      <Caption>
        <h2>ナビゲータ</h2>
        <CloseX />
      </Caption>
      <Sheet>
        <Tree>
          <TreeRow $level={0}><Icon name="root" size={15} />HotForex MT</TreeRow>
          {NAVIGATOR.map(([icon, label, level, state]) => (
            <TreeRow key={label} $level={level}>
              <Guide $deep={level === 2}>
                {state && <Expander $open={state === "open"} aria-label={label} />}
              </Guide>
              <Icon name={icon} size={15} />
              {level === 2 ? <><b>{label}</b>-Live</> : label}
            </TreeRow>
          ))}
        </Tree>
      </Sheet>
      <Tabs>
        <TabRow items={[["一般"], ["お気に入り"]]} />
      </Tabs>
    </Panel>
  )
}

export default function App() {
  return (
    <Frame>
      <GlobalStyle />
      <TopBars />
      <Body>
        <Side>
          <Panel $after={8}>
            <Caption>
              <h2>データウインドウ</h2>
              <CloseX />
            </Caption>
            <Sheet>
              <DataRow>
                <span><Icon name="line" size={15} />USDJPY,H1</span>
                <span />
                <span />
              </DataRow>
            </Sheet>
          </Panel>
          <MarketWatch />
          <Navigator />
        </Side>
        <Workspace>
          <Desktop>
            <WindowGrid>
              {CHARTS.map((chart, i) => (
                <ChartWindow key={chart.symbol} $active={chart.active}>
                  <ChartHead $active={chart.active} $height={i < 2 ? 30 : 28}>
                    <Icon name="symbol" size={18} />
                    <h3>{chart.symbol}</h3>
                    <WindowButtons $gap={26} $color={chart.active ? "#000" : "#b0b0b0"}>
                      <button aria-label="最小化"><WindowGlyph kind="min" /></button>
                      <button aria-label="最大化"><WindowGlyph kind="max" /></button>
                      <button aria-label="閉じる"><WindowGlyph kind="close" /></button>
                    </WindowButtons>
                  </ChartHead>
                  <ChartPlot chart={chart} />
                </ChartWindow>
              ))}
            </WindowGrid>
          </Desktop>
          <ChartTabs>
            <Tabs $plain $height={20}>
              <TabRow tight items={[["USDJPY,H1"], ["EURUSD,M30"], ["GBPUSD,H1"], ["USDCHF,H1"]]} />
            </Tabs>
            <svg width="26" height="8" fill="#a8a8a8" aria-hidden="true">
              <path d="M4 0v8L0 4zM22 0v8l4-4z" />
            </svg>
          </ChartTabs>
        </Workspace>
      </Body>

      <Dock $top={2}>
        <Spine>
          <CloseX />
          <h2>ツールボックス</h2>
        </Spine>
        <DockMain>
          <DockSheet $height={93}>
            <TradeTable>
              <colgroup>
                {COLUMNS.map(([, width], i) => <col key={i} width={width} />)}
              </colgroup>
              <thead>
                <tr>
                  {COLUMNS.map(([label], i) => (
                    <th key={i}>
                      {label}
                      {i === 0 && <svg width="7" height="4" aria-hidden="true"><path d="M0 4h7L3.500 0z" /></svg>}
                    </th>
                  ))}
                </tr>
              </thead>
              <tbody>
                <tr>
                  <td colSpan="9">
                    ・<span>残高: 100 000.00</span><em>JPY</em><span>有効証拠金: 100 000.00</span><span>余剰証拠金: 100 000.00</span>
                  </td>
                  <td>0.00</td>
                </tr>
              </tbody>
            </TradeTable>
          </DockSheet>
          <Tabs>
            <TabRow items={TOOLBOX_TABS} />
            <DockServices />
          </Tabs>
        </DockMain>
      </Dock>
      <Dock $top={4}>
        <Spine $clip>
          <CloseX />
          <h2>ストラテジテスター</h2>
        </Spine>
        <DockMain>
          <DockSheet $height={14} />
          <Tabs>
            <TabRow items={[["概要"], ["設定"], ["パラメータ"], ["エージェント"], ["操作ログ"]]} />
            <DockServices />
          </Tabs>
        </DockMain>
      </Dock>
      <StatusBar>
        <span>F1を押してヘルプを開く</span>
        <span>Euro</span>
        <span /><span /><span /><span /><span /><span />
        <span>
          <svg width="14" height="11" fill="#1fa82e" aria-hidden="true">
            <path d="M0 8h2v3H0zM3 6h2v5H3zM6 4h2v7H6zM9 2h2v9H9zM12 0h2v11h-2z" />
          </svg>
          54.7 / 0.0 Mb
        </span>
      </StatusBar>
    </Frame>
  )
}
